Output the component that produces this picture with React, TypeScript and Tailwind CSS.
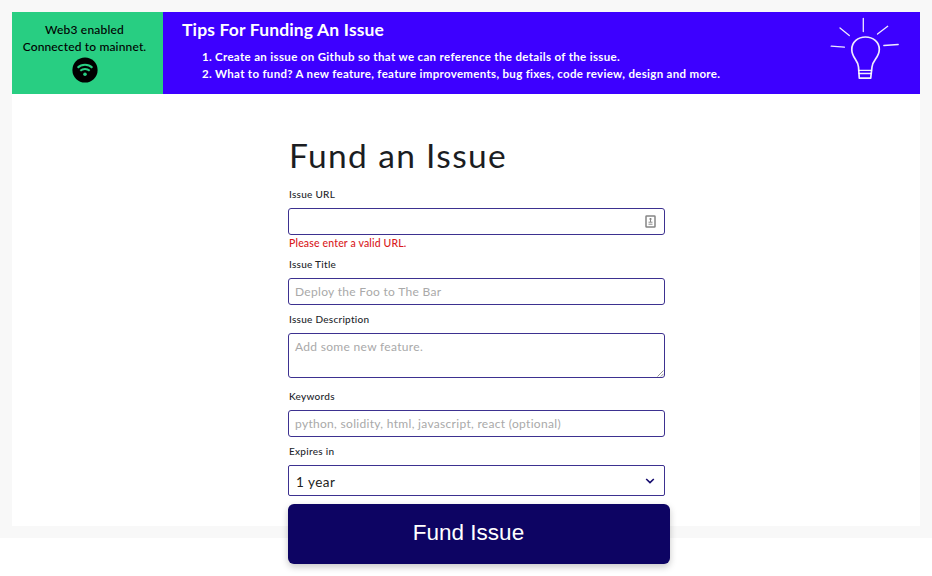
import React from 'react';

const fieldBox =
  'block w-[377px] rounded-[3px] border border-[#3d3190] bg-white px-[6px] text-[12px] tracking-[0.31px] text-[#222] outline-none placeholder:text-[#a9a9a9] placeholder:opacity-100';

function Label({ text }: { text: string }) {
  return (
    <label className="mb-[7px] -mt-px block h-[14px] whitespace-nowrap pl-px text-[10px] font-medium leading-[14px] tracking-[0.27px] text-[#24262b]">
      {text}
    </label>
  );
}

function WifiBadge() {
  return (
    <svg className="mt-[2px] block" width="26" height="26" viewBox="0 0 26 26" fill="none">
      <circle cx="13" cy="13" r="12.6" fill="#000" />
      <path d="M5.6 10.8a10.6 10.6 0 0 1 14.8 0" stroke="#28ce82" strokeWidth="2" />
      <path d="M8.3 13.7a7 7 0 0 1 9.4 0" stroke="#28ce82" strokeWidth="2" />
      <circle cx="13" cy="17.2" r="1.8" fill="#28ce82" />
    </svg>
  );
}

function Bulb() {
  return (
    <svg className="mt-[5px] block" width="70" height="64" viewBox="830 17 70 64" fill="none" stroke="#fff" strokeOpacity="0.92" strokeWidth="1.3" strokeLinecap="round">
      <path d="M863.3 18.3V31.5M840 28l9.3 7.6M887.7 26.3l-10.2 7.8M831.2 46.2l13.2 1M898.2 44.5l-14.4 1" />
      <path d="M859.3 78.2L858.5 67C858.2 60 851.8 58 851.8 49.5C851.8 42 858 37 865.5 37C873 37 879.3 42 879.3 49.5C879.2 58 872.4 60 872 67L870.7 78.2Z" strokeWidth="1.7" strokeLinejoin="round" />
      <path d="M858.6 70.3H871.6M859 73.5H871.2" />
    </svg>
  );
}

export default function App() {
  return (
    <div className="h-[576px] w-[932px] overflow-hidden bg-white font-[Lato,sans-serif]">
      <div className="h-[538px] bg-[#f8f8f8] p-[12px]">
        <div className="h-[514px] bg-white">
          <header className="flex h-[82px]">
            <div className="flex w-[151px] flex-col items-center bg-[#28ce82] pt-[10px] pr-[6px] text-[12px] leading-[16.5px] text-black">
              <span className="whitespace-nowrap font-medium tracking-[0.2px]">Web3 enabled</span>
              <span className="whitespace-nowrap font-medium tracking-[0.15px]">Connected to mainnet.</span>
              <WifiBadge />
            </div>
            <div className="flex flex-1 justify-between bg-[#3d00ff] pr-[20px] pl-[19px] text-white">
              <div>
                <h2 className="mt-[7px] h-[24px] whitespace-nowrap text-[17.5px] font-bold leading-[22px] tracking-[0.15px]">Tips For Funding An Issue</h2>
                <ol className="mt-[6px] pl-[20px] text-[11.5px] font-bold leading-[16.5px]">
                  <li className="flex whitespace-nowrap tracking-[0.34px]"><span className="w-[13px]">1.</span><span>Create an issue on Github so that we can reference the details of the issue.</span></li>
                  <li className="flex whitespace-nowrap tracking-[0.31px]"><span className="w-[13px]">2.</span><span>What to fund? A new feature, feature improvements, bug fixes, code review, design and more.</span></li>
                </ol>
              </div>
              <Bulb />
            </div>
          </header>
          <form className="ml-[276px] w-[382px] pt-[39px]">
            <h1 className="mb-[11px] h-[44px] whitespace-nowrap pl-px text-[33.5px] leading-[44px] tracking-[1.35px] text-[#1b1d22]">Fund an Issue</h1>
            <Label text="Issue URL" />
            <div className="relative">
              <input className={`${fieldBox} h-[27px]`} />
              <svg className="absolute top-[7px] left-[357px]" width="11" height="13" viewBox="0 0 11 13" fill="none">
                <rect x="1" y="1" width="9" height="11" rx="0.6" stroke="#858585" strokeWidth="1.5" />
                <circle cx="5.5" cy="4" r="1.1" fill="#777" />
                <path d="M5.5 4v3M3.5 7.2h4M3.5 9.2h4" stroke="#888" />
              </svg>
            </div>
            <p className="mt-px mb-[8px] h-[14px] whitespace-nowrap pl-px text-[10.5px] font-medium leading-[14px] tracking-[0.16px] text-[#d9191c]">Please enter a valid URL.</p>
            <Label text="Issue Title" />
            <input className={`${fieldBox} mb-[8px] h-[27px]`} placeholder="Deploy the Foo to The Bar" />
            <Label text="Issue Description" />
            <div className="relative mb-[12px]">
              <textarea className={`${fieldBox} h-[45px] resize-none overflow-hidden pt-[5px] leading-[16px]`} placeholder="Add some new feature." />
              <svg className="absolute top-[37px] left-[369px]" width="7" height="7" viewBox="0 0 7 7" stroke="#777" strokeWidth="0.8">
                <path d="M0.5 6.5l6-6M3.8 6.5l2.7-2.7" />
              </svg>
            </div>
            <Label text="Keywords" />
            <input className={`${fieldBox} mb-[8px] h-[27px]`} placeholder="python, solidity, html, javascript, react (optional)" />
            <Label text="Expires in" />
            <div className="mb-[8px] flex h-[31px] w-[377px] items-center justify-between rounded-[2px] border border-[#3d3190] bg-white pt-[3px] pr-[9px] pl-[7px] text-[13.5px] tracking-[0.5px] text-[#222]">
              <span>1 year</span>
              <svg className="-mt-[3px]" width="10" height="8" viewBox="0 0 10 8" fill="none" stroke="#150b6e" strokeWidth="1.6">
                <path d="M1.2 2l3.8 3.6L8.8 2" />
              </svg>
            </div>
            <button type="button" className="relative flex h-[60px] w-[382px] items-center justify-center rounded-[6px] bg-[#0d0463] pr-[21px] pb-[2px] font-['Liberation_Sans',Arial,sans-serif] text-[22.5px] text-white shadow-[0_3px_7px_rgba(0,0,0,0.22)]">
              Fund Issue
            </button>
          </form>
        </div>
      </div>
    </div>
  );
}
